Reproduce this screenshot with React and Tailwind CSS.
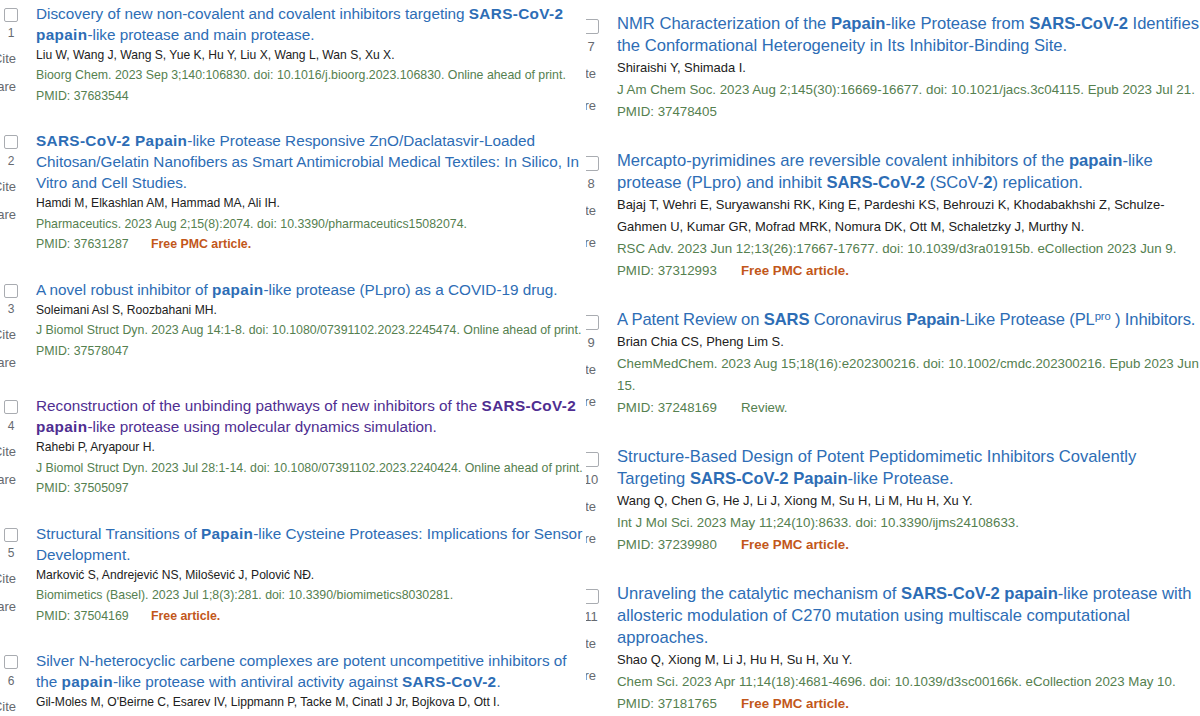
import React from "react";

const LEFT = [
  {
    n: 1,
    title: ["Discovery of new non-covalent and covalent inhibitors targeting **SARS-CoV-2**", "**papain**-like protease and main protease."],
    authors: ["Liu W, Wang J, Wang S, Yue K, Hu Y, Liu X, Wang L, Wan S, Xu X."],
    journal: ["Bioorg Chem. 2023 Sep 3;140:106830. doi: 10.1016/j.bioorg.2023.106830. Online ahead of print."],
    pmid: "37683544",
  },
  {
    n: 2,
    title: ["**SARS-CoV-2 Papain**-like Protease Responsive ZnO/Daclatasvir-Loaded", "Chitosan/Gelatin Nanofibers as Smart Antimicrobial Medical Textiles: In Silico, In", "Vitro and Cell Studies."],
    authors: ["Hamdi M, Elkashlan AM, Hammad MA, Ali IH."],
    journal: ["Pharmaceutics. 2023 Aug 2;15(8):2074. doi: 10.3390/pharmaceutics15082074."],
    pmid: "37631287",
    free: "Free PMC article.",
  },
  {
    n: 3,
    title: ["A novel robust inhibitor of **papain**-like protease (PLpro) as a COVID-19 drug."],
    authors: ["Soleimani Asl S, Roozbahani MH."],
    journal: ["J Biomol Struct Dyn. 2023 Aug 14:1-8. doi: 10.1080/07391102.2023.2245474. Online ahead of print."],
    pmid: "37578047",
  },
  {
    n: 4,
    visited: true,
    title: ["Reconstruction of the unbinding pathways of new inhibitors of the **SARS-CoV-2**", "**papain**-like protease using molecular dynamics simulation."],
    authors: ["Rahebi P, Aryapour H."],
    journal: ["J Biomol Struct Dyn. 2023 Jul 28:1-14. doi: 10.1080/07391102.2023.2240424. Online ahead of print."],
    pmid: "37505097",
  },
  {
    n: 5,
    title: ["Structural Transitions of **Papain**-like Cysteine Proteases: Implications for Sensor", "Development."],
    authors: ["Marković S, Andrejević NS, Milošević J, Polović NĐ."],
    journal: ["Biomimetics (Basel). 2023 Jul 1;8(3):281. doi: 10.3390/biomimetics8030281."],
    pmid: "37504169",
    free: "Free article.",
  },
  {
    n: 6,
    title: ["Silver N-heterocyclic carbene complexes are potent uncompetitive inhibitors of", "the **papain**-like protease with antiviral activity against **SARS-CoV-2**."],
    authors: ["Gil-Moles M, O'Beirne C, Esarev IV, Lippmann P, Tacke M, Cinatl J Jr, Bojkova D, Ott I."],
    journal: ["Dalton Trans. 2023 Jul 18;52(28):9695-9706. doi: 10.1039/d3dt01129j."],
    pmid: "37403712",
  },
];

const RIGHT = [
  {
    n: 7,
    title: ["NMR Characterization of the **Papain**-like Protease from **SARS-CoV-2** Identifies", "the Conformational Heterogeneity in Its Inhibitor-Binding Site."],
    authors: ["Shiraishi Y, Shimada I."],
    journal: ["J Am Chem Soc. 2023 Aug 2;145(30):16669-16677. doi: 10.1021/jacs.3c04115. Epub 2023 Jul 21."],
    pmid: "37478405",
  },
  {
    n: 8,
    title: ["Mercapto-pyrimidines are reversible covalent inhibitors of the **papain**-like", "protease (PLpro) and inhibit **SARS-CoV-2** (SCoV-**2**) replication."],
    authors: ["Bajaj T, Wehri E, Suryawanshi RK, King E, Pardeshi KS, Behrouzi K, Khodabakhshi Z, Schulze-", "Gahmen U, Kumar GR, Mofrad MRK, Nomura DK, Ott M, Schaletzky J, Murthy N."],
    journal: ["RSC Adv. 2023 Jun 12;13(26):17667-17677. doi: 10.1039/d3ra01915b. eCollection 2023 Jun 9."],
    pmid: "37312993",
    free: "Free PMC article.",
  },
  {
    n: 9,
    tight: true,
    title: ["A Patent Review on **SARS** Coronavirus **Papain**-Like Protease (PL^^pro^^ ) Inhibitors."],
    authors: ["Brian Chia CS, Pheng Lim S."],
    journal: ["ChemMedChem. 2023 Aug 15;18(16):e202300216. doi: 10.1002/cmdc.202300216. Epub 2023 Jun", "15."],
    pmid: "37248169",
    review: "Review.",
  },
  {
    n: 10,
    title: ["Structure-Based Design of Potent Peptidomimetic Inhibitors Covalently", "Targeting **SARS-CoV-2 Papain**-like Protease."],
    authors: ["Wang Q, Chen G, He J, Li J, Xiong M, Su H, Li M, Hu H, Xu Y."],
    journal: ["Int J Mol Sci. 2023 May 11;24(10):8633. doi: 10.3390/ijms24108633."],
    pmid: "37239980",
    free: "Free PMC article.",
  },
  {
    n: 11,
    title: ["Unraveling the catalytic mechanism of **SARS-CoV-2 papain**-like protease with", "allosteric modulation of C270 mutation using multiscale computational", "approaches."],
    authors: ["Shao Q, Xiong M, Li J, Hu H, Su H, Xu Y."],
    journal: ["Chem Sci. 2023 Apr 11;14(18):4681-4696. doi: 10.1039/d3sc00166k. eCollection 2023 May 10."],
    pmid: "37181765",
    free: "Free PMC article.",
  },
];

function renderLine(line, boldCls) {
  const out = [];
  const parts = line.split("**");
  parts.forEach((p, i) => {
    const bold = i % 2 === 1;
    const sub = p.split("^^");
    sub.forEach((s, j) => {
      if (!s) return;
      const sup = j % 2 === 1;
      if (sup) {
        out.push(
          <span key={`${i}-${j}`} className="relative top-[-0.42em] text-[0.68em] leading-none">
            {s}
          </span>
        );
      } else if (bold) {
        out.push(
          <b key={`${i}-${j}`} className={boldCls}>
            {s}
          </b>
        );
      } else {
        out.push(<span key={`${i}-${j}`}>{s}</span>);
      }
    });
  });
  return out;
}

const STYLES = {
  L: {
    art: "flex mb-[24px]",
    gutter: "w-[36px] shrink-0 flex flex-col text-[#666a70]",
    box: "mt-[5px] ml-[4px] w-[14px] h-[14px] border-[1.5px] border-[#a9acb1] rounded-[2px] bg-white",
    num: "mt-[3.5px] w-[22px] text-center text-[12px] leading-[16px]",
    cite: "mt-[10px] w-[16px] flex justify-end text-[13px] leading-[16px] whitespace-nowrap",
    share: "mt-[12px] w-[16px] flex justify-end text-[13px] leading-[16px] whitespace-nowrap",
    title: "text-[15.3px] leading-[21px]",
    bold: "font-bold tracking-[0.35px]",
    authors: "text-[12.1px] leading-[20.5px] text-[#212121]",
    journal: "text-[12.35px] leading-[20.5px] text-[#55804f]",
    pmidRow: "text-[12.35px] leading-[20.5px] text-[#55804f] flex",
    pmid: "w-[115px]",
  },
  R: {
    art: "flex mb-[27px]",
    gutter: "w-[38px] shrink-0 flex flex-col text-[#666a70]",
    box: "mt-[6px] ml-[5px] w-[15px] h-[15px] border-[1.5px] border-[#a9acb1] rounded-[2px] bg-white",
    num: "mt-[4px] w-[24px] text-center text-[13px] leading-[17px]",
    cite: "mt-[9.5px] w-[17px] flex justify-end text-[13px] leading-[17px] whitespace-nowrap",
    share: "mt-[15px] w-[17px] flex justify-end text-[13px] leading-[17px] whitespace-nowrap",
    title: "text-[16.6px] leading-[22px]",
    bold: "font-bold",
    authors: "text-[12.95px] leading-[22px] text-[#212121]",
    journal: "text-[13.3px] leading-[22px] text-[#55804f]",
    pmidRow: "text-[13.3px] leading-[22px] text-[#55804f] flex",
    pmid: "w-[124px]",
  },
};

function Article({ a, v }) {
  const s = STYLES[v];
  const color = a.visited ? "text-[#4f2e91]" : "text-[#2d6db5]";
  const tight = a.tight ? "tracking-[-0.14px]" : "";
  return (
    <div className={s.art}>
      <div className={s.gutter}>
        <div className={s.box} />
        <div className={s.num}>{a.n}</div>
        <div className={s.cite}>
          <span>Cite</span>
        </div>
        <div className={s.share}>
          <span>Share</span>
        </div>
      </div>
      <div className="flex flex-col min-w-0">
        <div className={`${s.title} ${color} ${tight}`}>
          {a.title.map((l, i) => (
            <div key={i} className="whitespace-nowrap">
              {renderLine(l, s.bold)}
            </div>
          ))}
        </div>
        <div className={s.authors}>
          {a.authors.map((l, i) => (
            <div key={i} className="whitespace-nowrap">
              {l}
            </div>
          ))}
        </div>
        <div className={s.journal}>
          {a.journal.map((l, i) => (
            <div key={i} className="whitespace-nowrap">
              {l}
            </div>
          ))}
        </div>
        <div className={s.pmidRow}>
          <span className={s.pmid}>PMID: {a.pmid}</span>
          {a.free && <span className="font-bold text-[#c2571a]">{a.free}</span>}
          {a.review && <span>{a.review}</span>}
        </div>
      </div>
    </div>
  );
}

export default function App() {
  return (
    <div className="w-[1200px] h-[716px] overflow-hidden bg-white flex font-['Liberation_Sans',Arial,sans-serif]">
      <div className="w-[586px] shrink-0 overflow-hidden pt-[2.5px]">
        {LEFT.map((a) => (
          <Article key={a.n} a={a} v="L" />
        ))}
      </div>
      <div className="flex-1 min-w-0 overflow-hidden pt-[13px]">
        <div className="ml-[-7px]">
          {RIGHT.map((a) => (
            <Article key={a.n} a={a} v="R" />
          ))}
        </div>
      </div>
    </div>
  );
}
